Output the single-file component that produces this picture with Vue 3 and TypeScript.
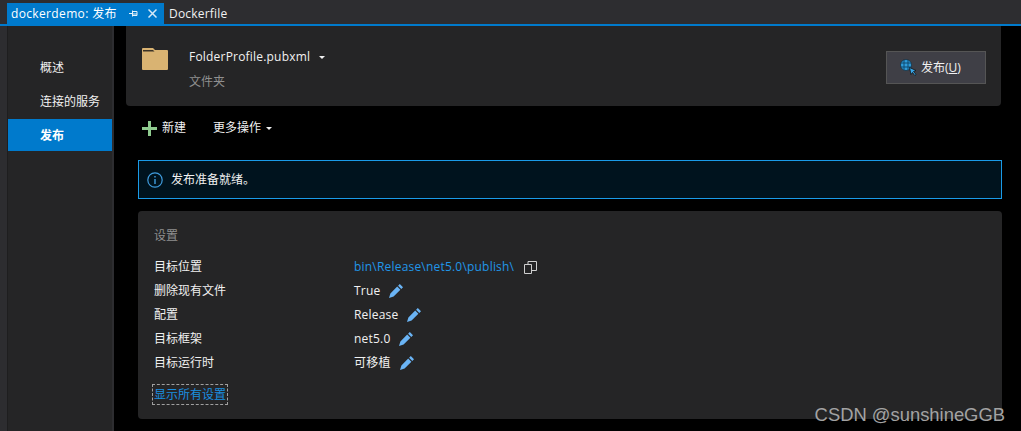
<script setup lang="ts">
const nav = ['概述', '连接的服务', '发布'];
const rows = [
  { label: '删除现有文件', value: 'True' },
  { label: '配置', value: 'Release' },
  { label: '目标框架', value: 'net5.0' },
  { label: '目标运行时', value: '可移植' },
];
</script>

<template>
  <div class="page">
    <div class="tabs">
      <div class="tab active">
        <span class="tabname">dockerdemo: 发布</span>
        <svg class="pin" width="9" height="9" viewBox="0 0 9 9"><path d="M0 4.500h3M3.500 1.500v6M3.500 2.500h4.500v4h-4.500M3.500 5h4.500" fill="none" stroke="#e6f2fa" stroke-width="1" /></svg>
        <svg class="close" width="9" height="9" viewBox="0 0 9 9"><path d="M.5.5l8 8M8.500.5l-8 8" stroke="#d5e9f7" stroke-width="1.500" /></svg>
      </div>
      <div class="tab plain">Dockerfile</div>
    </div>
    <div class="main">
      <aside class="side">
        <div v-for="n in nav" :key="n" class="nav" :class="{ on: n === '发布' }">{{ n }}</div>
      </aside>
      <section class="content">
        <div class="top">
          <svg class="folder" width="26" height="22" viewBox="0 0 26 22"><path d="M0 1q0-1 1-1h10l2 2h12q1 0 1 1v18q0 1-1 1H1q-1 0-1-1z" fill="#d9b372" /><path d="M1 2h10l1.500 1.500H1z" fill="#3a3226" /></svg>
          <div class="profile">
            <div class="pname">FolderProfile.pubxml<i class="caret pcaret"></i></div>
            <div class="ptype">文件夹</div>
          </div>
          <button class="publish">
            <svg width="17" height="17" viewBox="0 0 17 17">
              <circle cx="6" cy="6" r="5.500" fill="#2f9bd9" stroke="#0b2230" stroke-width=".6" />
              <path d="M1 4h10M1 8h10M4 1v10M8 1v10" stroke="#0f4a70" stroke-width="1" fill="none" />
              <path d="M9.500 8.500l6.500 3-2.500 1 2.500 3-1.200 1-2.300-3-1.500 2z" fill="#3aa6e6" stroke="#0a0a0a" stroke-width=".7" />
            </svg>
            <span>发布(<u>U</u>)</span>
          </button>
        </div>
        <div class="tools">
          <svg width="15" height="15" viewBox="0 0 15 15"><path d="M6 0h3v6h6v3H9v6H6V9H0V6h6z" fill="#8fcb8f" /></svg>
          <span class="new">新建</span>
          <span class="more">更多操作<i class="caret"></i></span>
        </div>
        <div class="alert">
          <svg width="16" height="16" viewBox="0 0 16 16"><circle cx="8" cy="8" r="7.200" fill="none" stroke="#3f9ddf" stroke-width="1.200" /><path d="M8 7v5M8 4v1.600" stroke="#3f9ddf" stroke-width="1.400" /></svg>
          <span>发布准备就绪。</span>
        </div>
        <div class="settings">
          <div class="title">设置</div>
          <div class="grid">
            <div class="row">
              <span class="lab">目标位置</span>
              <span class="link">bin\Release\net5.0\publish\</span>
              <svg class="copy" width="13" height="13" viewBox="0 0 13 13"><path d="M.5 3.500h7v9h-7zM4 3.500V.5h8.500v9h-5" fill="none" stroke="#cfcfcf" stroke-width="1" /></svg>
            </div>
            <div v-for="r in rows" :key="r.label" class="row">
              <span class="lab">{{ r.label }}</span>
              <span class="val">{{ r.value }}</span>
              <svg class="pen" width="14" height="14" viewBox="0 0 14 14"><path d="M10.800 0l3.200 3.200-1.700 1.700-3.200-3.200zM8.200 2.600l3.200 3.200-6.800 6.800-4.600 1.400 1.400-4.600z" fill="#6ab4f5" /></svg>
            </div>
          </div>
          <a class="all">显示所有设置</a>
        </div>
      </section>
    </div>
    <div class="mark">CSDN @sunshineGGB</div>
  </div>
</template>

<style>
html, body { margin: 0; background: #2d2d30; }
</style>

<style scoped>
.page { position: relative; width: 1021px; height: 431px; overflow: hidden; background: #2d2d30; color: #f1f1f1; font: 12px/16px "Open Sans", "Noto Sans CJK SC", sans-serif; display: flex; flex-direction: column; }
.tabs { height: 21px; padding: 3px 0 0 7px; display: flex; border-bottom: 2px solid #007acc; box-sizing: content-box; flex: none; }
.tab { height: 21px; display: flex; align-items: center; padding: 0 5px; }
.plain { letter-spacing: .2px; }
.tab.active { width: 157px; box-sizing: border-box; padding: 0 4px; background: #007acc; color: #fff; }
.tabname { letter-spacing: .35px; }
.pin { margin-left: 12px; }
.close { margin-left: 10px; }
.main { flex: 1; display: flex; min-height: 0; }
.side { width: 104px; margin-left: 7px; padding-top: 25px; background: #252526; border-left: 1px solid #1e1e1f; border-right: 2px solid #2d2d30; flex: none; }
.nav { height: 32px; line-height: 34px; padding-left: 32px; margin-bottom: 2px; }
.nav.on { background: #007acc; font-weight: 700; color: #fff; }
.content { flex: 1; background: #000; padding-left: 12px; min-width: 0; }
.top { width: 875px; height: 80px; box-sizing: border-box; padding: 0 15px 0 16px; background: #252526; border-radius: 0 0 4px 4px; display: flex; align-items: flex-start; }
.folder { margin-top: 22px; }
.profile { margin-left: 21px; margin-top: 23px; }
.pname { height: 16px; letter-spacing: .2px; }
.ptype { margin-top: 9px; color: #8f8f8f; }
.caret { display: inline-block; border: 3px solid transparent; border-top: 3px solid #f1f1f1; border-bottom: 0; margin-left: 5px; vertical-align: 2px; }
.pcaret { margin-left: 9px; }
.publish { width: 100px; height: 33px; margin: 25px 0 0 auto; background: #3f3f46; border: 1px solid #555; color: #f1f1f1; font: inherit; display: flex; align-items: center; gap: 4px; padding: 0 0 0 13px; }
.tools { height: 54px; flex: none; display: flex; align-items: center; padding-left: 16px; box-sizing: border-box; padding-bottom: 10px; }
.new { margin-left: 5px; }
.more { margin-left: 27px; }
.alert { width: 864px; height: 39px; box-sizing: border-box; margin-left: 12px; border: 1px solid #1a9be8; background: #00131e; display: flex; align-items: center; gap: 8px; padding-left: 8px; }
.settings { width: 864px; height: 208px; box-sizing: border-box; margin: 12px 0 0 12px; background: #252526; border-radius: 4px; padding: 17px 0 0 16px; }
.title { color: #8f8f8f; height: 16px; }
.grid { margin-top: 11px; }
.row { height: 24px; display: flex; align-items: center; }
.lab { width: 200px; }
.link { color: #2196e8; letter-spacing: .2px; }
.val { color: #f1f1f1; letter-spacing: .2px; }
.copy { margin-left: 10px; }
.pen { margin-left: 9px; }
.all { display: inline-block; margin-top: 9px; margin-left: -2px; padding: 1px; height: 17px; line-height: 17px; color: #1a8fe0; border: 1px dashed #a0a0a0; }
.mark { position: absolute; right: 16px; bottom: 6px; color: #a3a3a3; font: 18.400px/20px "Liberation Sans", sans-serif; }
</style>
